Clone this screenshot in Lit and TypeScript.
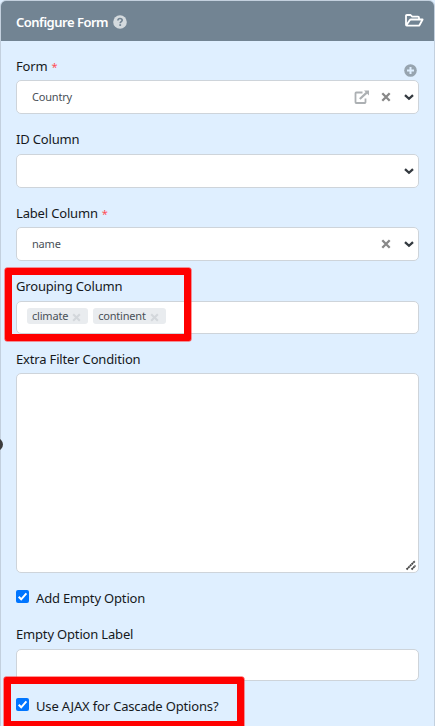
import { LitElement, html, css, nothing } from "lit";
import { customElement, property } from "lit/decorators.js";

const clearIcon = html`<svg class="clear" width="10" height="10" viewBox="0 0 10 10">
  <path d="M1.3 1.3 8.7 8.7M8.7 1.3 1.3 8.7" fill="none" stroke="currentColor" stroke-width="2.3" /></svg>`;
const chevron = html`<svg class="chevron" width="10" height="7" viewBox="0 0 10 7">
  <path d="M1 1.2 5 4.8 9 1.2" fill="none" stroke="#343a40" stroke-width="2.3" /></svg>`;
const external = html`<svg class="external" width="16" height="15" viewBox="0 0 16 15">
  <g fill="none" stroke="#acb0b3">
    <path d="M8.5 2.5H2.2Q1.5 2.5 1.5 3.2V12.3Q1.5 13 2.2 13H10.8Q11.5 13 11.5 12.3V8.5" stroke-width="1.8" />
    <path d="M5.8 9 13 2.4" stroke-width="2.2" />
  </g><path d="M10 .5h5v5z" fill="#acb0b3" /></svg>`;
const help = html`<svg width="14" height="14" viewBox="0 0 14 14">
  <circle cx="7" cy="7" r="6.8" fill="#d4dade" />
  <path d="M4.9 5.5C5 3.9 6 3.5 7 3.5c1.3 0 2.2.7 2.2 1.8C9.2 6.7 7.2 6.7 7.2 8.3" fill="none" stroke="#728493" stroke-width="1.6" />
  <rect x="6.3" y="9.2" width="1.8" height="1.7" fill="#728493" /></svg>`;
const plus = html`<svg width="13" height="13" viewBox="0 0 13 13">
  <circle cx="6.5" cy="6.5" r="6.3" fill="#97a4af" />
  <path d="M6.5 3v7M3 6.5h7" stroke="#dfefff" stroke-width="2" /></svg>`;
const folder = html`<svg width="19" height="13" viewBox="0 0 19 13">
  <path d="M1 10.8V1.9Q1 1 1.9 1H5.6L7.2 2.7H13Q14 2.7 14 3.7V5.3M1.3 11.3 4.7 6.2Q5.2 5.5 6 5.5H17.6L14.6 11Q14.2 11.7 13.4 11.7H1.7Q1 11.7 1 10.8" fill="none" stroke="#fff" stroke-width="1.8" stroke-linejoin="round" /></svg>`;

@customElement("form-field")
class FormField extends LitElement {
  @property() label = "";
  @property({ type: Boolean }) required = false;
  static styles = css`
    :host { display: block; }
    .label { display: flex; height: 24px; line-height: 20px; white-space: pre; }
    .star { color: #ff4d55; font-size: 11px; line-height: 21px; margin-left: 4px; }
    .action { margin: 8px 2px 0 auto; line-height: 0; }
  `;
  render() {
    return html`<div class="label"><span>${this.label}</span>${this.required ? html`<span class="star">*</span>` : nothing}<span class="action"><slot name="action"></slot></span></div><slot></slot>`;
  }
}

@customElement("check-option")
class CheckOption extends LitElement {
  @property() label = "";
  static styles = css`
    :host { display: flex; height: 20px; line-height: 20px; }
    .box { width: 13px; height: 13px; border-radius: 2px; background: #0075ff; margin: 2px 7px 0 0; flex: none; }
    svg { display: block; }
  `;
  render() {
    return html`<span class="box"><svg width="13" height="13" viewBox="0 0 13 13">
      <path d="M2.7 6.8 5.2 9.3 10.4 3.3" fill="none" stroke="#fff" stroke-width="2" /></svg></span>
      <span>${this.label}</span>`;
  }
}

@customElement("app-root")
class AppRoot extends LitElement {
  static styles = css`
    :host { display: block; position: relative; height: 726px; overflow: hidden; background: #dfefff;
      font: 400 13px "Noto Sans", "Open Sans", sans-serif; letter-spacing: -.17px; color: #16191c; }
    * { box-sizing: border-box; }
    .panel { height: 740px; border: 1px solid #c3d0de; border-radius: 6px; overflow: hidden; background: #dfefff; }
    .head { height: 40px; background: #728493; color: #fff; font-weight: 600; letter-spacing: -.5px; display: flex; align-items: center; padding: 2px 10px 0 15px; }
    .head svg { display: block; }
    .title { margin-right: 5px; }
    .folder { margin: -4px 0 0 auto; }
    .body { padding: 15px 15px 0; }
    .gap { margin-top: 15px; }
    .low .box { margin-top: 1px; }
    .box { position: relative; height: 34px; border: 1px solid #ced4da; border-radius: 5px; background: #fff;
      display: flex; align-items: center; padding: 0 4px 0 15px; font-size: 11px; font-weight: 400; letter-spacing: -.2px; color: #495057; }
    .value { margin-top: -1px; }
    .tags { height: 33px; padding: 0 10px; gap: 5px; }
    .area { height: 200px; }
    .short { height: 32px; }
    .tools { display: flex; align-items: center; margin-left: auto; color: #888; }
    .external { margin-right: 10.5px; }
    .clear { margin-right: 13.5px; }
    .chevron { margin-top: 1px; }
    .tag { height: 16px; line-height: 16px; display: flex; align-items: center; border-radius: 3px; background: #e9ecef; padding: 0 7px 0 5px; margin-top: -3px; }
    .tag svg { width: 9px; height: 9px; margin: 3px 0 0 4px; color: #d3d7db; }
    .grip { position: absolute; right: 1px; bottom: 1px; }
    .check { margin-top: 15px; }
    .empty { margin-top: 16px; }
    .mark { position: absolute; border: 7px solid #f00; border-radius: 2px; box-shadow: 0 0 0 .5px #ff3030; }
    .mark.group { left: 5px; top: 268px; width: 186px; height: 73px; }
    .mark.ajax { left: 4px; top: 677px; width: 240px; height: 51px; }
    .handle { position: absolute; left: -10px; top: 438px; width: 13px; height: 13px; border-radius: 50%; background: #3b3b3b; }
  `;
  render() {
    return html`
      <div class="panel">
        <div class="head"><span class="title">Configure Form</span>${help}<span class="folder">${folder}</span></div>
        <div class="body">
          <form-field label="Form" required><span slot="action">${plus}</span>
            <div class="box"><span class="value">Country</span><span class="tools">${external}${clearIcon}${chevron}</span></div></form-field>
          <form-field class="gap low" label="ID Column"><div class="box"><span class="tools">${chevron}</span></div></form-field>
          <form-field class="gap" label="Label Column" required>
            <div class="box"><span class="value">name</span><span class="tools">${clearIcon}${chevron}</span></div></form-field>
          <form-field class="gap low" label="Grouping Column">
            <div class="box tags">${["climate", "continent"].map((t) => html`<span class="tag">${t}${clearIcon}</span>`)}</div></form-field>
          <form-field class="gap" label="Extra Filter Condition">
            <div class="box area"><svg class="grip" width="12" height="12" viewBox="0 0 12 12">
              <path d="M1.5 10.5 10 2M6.5 10.5 10.5 6.5" stroke="#444" stroke-width="1.8" stroke-dasharray="2 .4" /></svg></div></form-field>
          <check-option class="check" label="Add Empty Option"></check-option>
          <form-field class="empty low" label="Empty Option Label"><div class="box short"></div></form-field>
          <check-option class="check" label="Use AJAX for Cascade Options?"></check-option>
        </div>
      </div>
      <div class="handle"></div>
      <div class="mark group"></div>
      <div class="mark ajax"></div>
    `;
  }
}
